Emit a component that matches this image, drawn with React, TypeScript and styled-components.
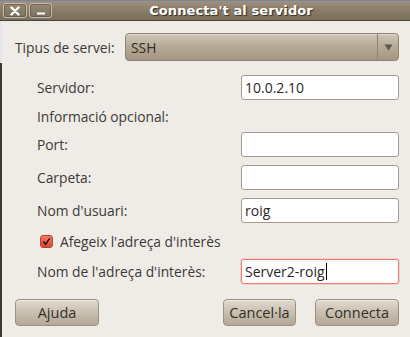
import { FC } from 'react';
import styled, { createGlobalStyle } from 'styled-components';

const Global = createGlobalStyle`
    html, body {
        margin:0;
        padding:0;
        background:#efebe7;
    }
    * { box-sizing:border-box; }
`;

const Window = styled.div`
    width:410px;
    height:337px;
    overflow:hidden;
    display:flex;
    flex-direction:column;
    background-color:#efebe7;
    font-family:"Open Sans", "Liberation Sans", sans-serif;
    font-size:13.8px;
    color:#3c3a36;
`;

const TitleBar = styled.div`
    height:21px;
    display:flex;
    align-items:center;
    padding:0 0 0 3px;
    background:linear-gradient(#9d917f, #857865 60%, #7b6f5e);
    border-top:1px solid #7c8597;
    border-bottom:1px solid #4a4138;
`;

const WinButtons = styled.div`
    display:flex;
    gap:2px;
`;

const WinButton = styled.div<{ $w: number }>`
    width:${p => p.$w}px;
    height:15px;
    border:1px solid #c8bdad;
    border-radius:3px;
    background:linear-gradient(#958874, #7c705f);
    display:flex;
    align-items:center;
    justify-content:center;
    box-shadow:inset 0 0 0 1px rgba(80,70,60,0.5);
`;

const Title = styled.div`
    flex:1;
    text-align:center;
    font-family:"DejaVu Sans", sans-serif;
    font-weight:bold;
    font-size:13px;
    color:#ffffff;
    text-shadow:1px 1px 1px #2e2a25;
    letter-spacing:0.1px;
`;

const Body = styled.div`
    flex:1;
    display:flex;
`;

const EdgeStrip = styled.div`
    width:2px;
    background:linear-gradient(#e2e5ec 0, #e2e5ec 42px, #3d3832 42px, #3d3832 100%);
`;

const Content = styled.div`
    flex:1;
    display:flex;
    flex-direction:column;
    padding:12px 11px 0 13px;
`;

const ServiceRow = styled.div`
    display:flex;
    align-items:center;
    height:28px;
`;

const ServiceLabel = styled.div`
    width:110px;
`;

const Combo = styled.div`
    flex:1;
    height:28px;
    display:flex;
    border:1px solid #8f8472;
    border-radius:4px;
    background:linear-gradient(#cfc6b8, #b3a692 55%, #a49682);
    box-shadow:inset 0 1px 0 rgba(255,255,255,0.35);
`;

const ComboText = styled.div`
    flex:1;
    padding-left:5px;
    display:flex;
    align-items:center;
    color:#2f2b26;
`;

const ComboArrow = styled.div`
    width:21px;
    border-left:1px solid #8f8472;
    display:flex;
    align-items:center;
    justify-content:center;
`;

const Form = styled.div`
    display:grid;
    grid-template-columns:1fr 158px;
    row-gap:8px;
    padding-left:22px;
    margin-top:14px;
`;

const Label = styled.div<{ $h?: number }>`
    display:flex;
    align-items:center;
    height:${p => p.$h ?? 25}px;
`;

const Entry = styled.div<{ $focus?: boolean }>`
    height:25px;
    border:1px solid ${p => (p.$focus ? '#ee7e70' : '#a59c8c')};
    border-radius:3px;
    background:#ffffff;
    display:flex;
    align-items:center;
    padding-left:3px;
    font-size:14px;
    color:#2a2824;
    box-shadow:${p => (p.$focus ? '0 0 0 1px rgba(240,140,120,0.25)' : 'none')};
`;

const Caret = styled.span`
    display:inline-block;
    width:1px;
    height:17px;
    background:#000;
    margin-left:1px;
`;

const CheckRow = styled.div`
    grid-column:1 / span 2;
    height:20px;
    display:flex;
    align-items:center;
    gap:7px;
    padding-left:3px;
`;

const CheckBox = styled.div`
    width:13px;
    height:13px;
    border-radius:3px;
    border:1px solid #b8412e;
    background:linear-gradient(#f27a62, #dc4a33);
    display:flex;
    align-items:center;
    justify-content:center;
`;

const Buttons = styled.div`
    display:flex;
    margin-top:15px;
    gap:19px;
`;

const Spacer = styled.div`
    flex:1;
`;

const Button = styled.div<{ $w: number }>`
    width:${p => p.$w}px;
    height:27px;
    border:1px solid #9c9180;
    border-radius:4px;
    background:linear-gradient(#e1dacf, #c9bfb0 50%, #b4a896);
    display:flex;
    align-items:center;
    justify-content:center;
    color:#34302b;
    font-size:14.5px;
    box-shadow:inset 0 1px 0 rgba(255,255,255,0.45);
`;

const App: FC = () => (
    <Window>
        <Global />
        <TitleBar>
            <WinButtons>
                <WinButton $w={24}>
                    <svg width="10" height="10" viewBox="0 0 10 10">
                        <path d="M1.5 1.5 L8.5 8.5 M8.5 1.5 L1.5 8.5" stroke="#ffffff" strokeWidth="2.4" strokeLinecap="round" />
                    </svg>
                </WinButton>
                <WinButton $w={23}>
                    <svg width="10" height="10" viewBox="0 0 10 10">
                        <rect x="1" y="6.5" width="8" height="2" fill="#ffffff" />
                    </svg>
                </WinButton>
            </WinButtons>
            <Title>Connecta't al servidor</Title>
        </TitleBar>
        <Body>
            <EdgeStrip />
            <Content>
                <ServiceRow>
                    <ServiceLabel>Tipus de servei:</ServiceLabel>
                    <Combo>
                        <ComboText>SSH</ComboText>
                        <ComboArrow>
                            <svg width="9" height="7" viewBox="0 0 9 7">
                                <path d="M0.5 0.5 L8.5 0.5 L4.5 6.5 Z" fill="#5b554c" />
                            </svg>
                        </ComboArrow>
                    </Combo>
                </ServiceRow>
                <Form>
                    <Label>Servidor:</Label>
                    <Entry>10.0.2.10</Entry>
                    <Label $h={16}>Informació opcional:</Label>
                    <div />
                    <Label>Port:</Label>
                    <Entry />
                    <Label>Carpeta:</Label>
                    <Entry />
                    <Label>Nom d'usuari:</Label>
                    <Entry>roig</Entry>
                    <CheckRow>
                        <CheckBox>
                            <svg width="9" height="9" viewBox="0 0 9 9">
                                <path d="M1.2 4.6 L3.6 7.2 L7.8 1.4" stroke="#2a1a16" strokeWidth="1.6" fill="none" />
                            </svg>
                        </CheckBox>
                        Afegeix l'adreça d'interès
                    </CheckRow>
                    <Label>Nom de l'adreça d'interès:</Label>
                    <Entry $focus>Server2-roig<Caret /></Entry>
                </Form>
                <Buttons>
                    <Button $w={84}>Ajuda</Button>
                    <Spacer />
                    <Button $w={73}>Cancel·la</Button>
                    <Button $w={84}>Connecta</Button>
                </Buttons>
            </Content>
        </Body>
    </Window>
);

export default App;
